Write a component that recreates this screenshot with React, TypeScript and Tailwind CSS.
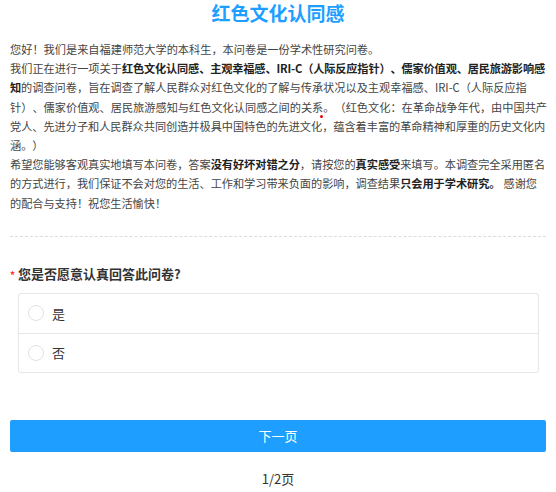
import { useState } from "react";

const FONT = { fontFamily: '"Noto Sans CJK SC", "Noto Sans", sans-serif' };

const OPTIONS = ["是", "否"];

function Radio({ checked }: { checked: boolean }) {
  return (
    <span
      className={`inline-block w-[16px] h-[16px] rounded-full border ${
        checked ? "border-[#1e9fff] border-[5px]" : "border-[#e2e2e2]"
      } bg-white`}
    />
  );
}

export default function App() {
  const [answer, setAnswer] = useState<string | null>(null);

  return (
    <div className="w-full min-h-screen bg-white text-[#333] [text-spacing-trim:space-all]" style={FONT}>
      <div className="h-[25px] flex items-center justify-center">
        <h1 className="text-[19px] font-bold text-[#1e9fff] leading-[24px]">红色文化认同感</h1>
      </div>

      <div className="pl-[10px] pr-[9px] pt-[15px] pb-[23px] text-[11.2px] leading-[19.2px] text-[#444]">
        <p>您好！我们是来自福建师范大学的本科生，本问卷是一份学术性研究问卷。</p>
        <p>
          我们正在进行一项关于
          <b className="text-[#222] tracking-[-0.15px]">红色文化认同感、主观幸福感、IRI-C（人际反应指针）、儒家价值观、居民旅游影响感知</b>
          的调查问卷，旨在调查了解人民群众对红色文化的了解与传承状况以及主观幸福感、IRI-C（人际反应指针）、儒家价值观、居民旅游感知与红色文化认同感之间的关系。（红色文化：在革命战争年代，由中国共产
          <span className="tracking-[-0.04px]">
            党人、先进分子和人民群众共同创造并极具中国特色的先进文
            <span className="relative">
              化<span className="absolute -top-[3px] right-[-1px] w-[3px] h-[3px] rounded-full bg-red-600" />
            </span>
            ，蕴含着丰富的革命精神和厚重的历史文化内涵。）
          </span>
        </p>
        <p className="tracking-[-0.04px]">
          希望您能够客观真实地填写本问卷，答案<b className="text-[#222]">没有好坏对错之分</b>，请按您的
          <b className="text-[#222]">真实感受</b>来填写。本调查完全采用匿名的方式进行，我们保证不会对您的生活、工作和学习带来负面的影响，调查结果
          <b className="text-[#222]">只会用于学术研究。</b>
          <span className="ml-[3px]">感谢您的配合与支持！祝您生活愉快！</span>
        </p>
      </div>

      <div className="mx-[10px] border-t border-dashed border-[#dcdcdc]" />

      <div className="px-[10px] pt-[26px]">
        <div className="flex items-center text-[13px] font-bold text-[#333] leading-[20px]">
          <span className="text-[#ff3333] text-[10px] w-[8px] mt-[2px]">*</span>
          <span>您是否愿意认真回答此问卷?</span>
        </div>

        <div className="mt-[8px] ml-[8px] mr-[7px] border border-[#e6e6e6] rounded-[3px]">
          {OPTIONS.map((opt, i) => (
            <label
              key={opt}
              onClick={() => setAnswer(opt)}
              className={`flex items-center gap-[8px] h-[39px] pl-[9px] text-[13px] cursor-pointer ${
                i > 0 ? "border-t border-[#e6e6e6]" : ""
              }`}
            >
              <Radio checked={answer === opt} />
              <span className="text-[#333]">{opt}</span>
            </label>
          ))}
        </div>
      </div>

      <div className="px-[10px] pt-[47px]">
        <button className="w-full h-[32px] bg-[#1e9fff] rounded-[2px] text-white text-[13px]">下一页</button>
        <div className="text-center text-[13px] text-[#333] mt-[17px] leading-[20px]">1/2页</div>
      </div>
    </div>
  );
}
